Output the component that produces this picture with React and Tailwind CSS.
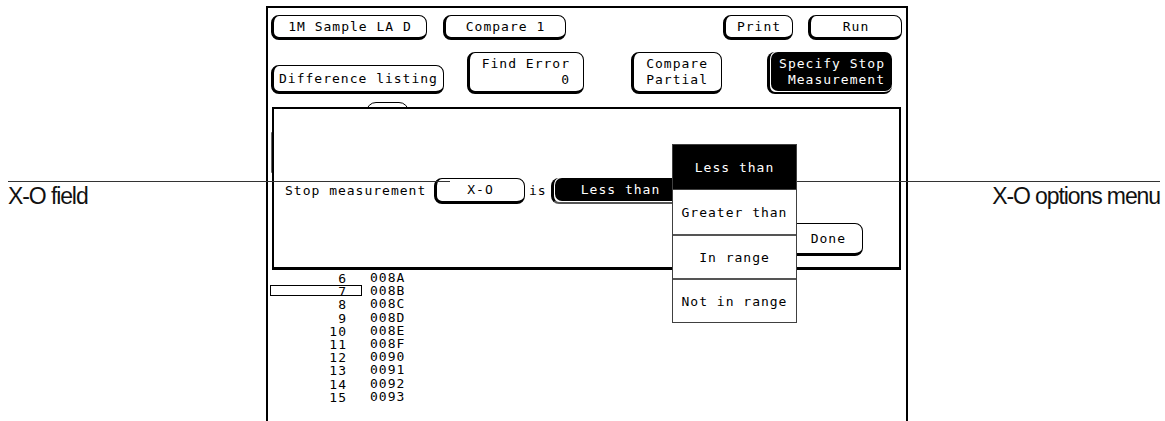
import React from "react";

const MONO = "font-['DejaVu_Sans_Mono',monospace] text-[13px] tracking-[1px] leading-none text-black";

function Btn({ className = "", children }) {
  return (
    <div
      className={`flex shrink-0 bg-white border border-black border-l-[3px] border-b-[3px] rounded-[8px] ${className}`}
    >
      {children}
    </div>
  );
}

function BlackBtn({ className = "", inner = "", children }) {
  return (
    <div
      className={`flex shrink-0 bg-white border-l-[3px] border-b-[2px] border-black rounded-[8px] pl-px pb-px ${className}`}
    >
      <div className={`flex flex-1 bg-black rounded-[7px] text-white ${inner}`}>{children}</div>
    </div>
  );
}

const rows = [
  ["6", "008A"],
  ["7", "008B"],
  ["8", "008C"],
  ["9", "008D"],
  ["10", "008E"],
  ["11", "008F"],
  ["12", "0090"],
  ["13", "0091"],
  ["14", "0092"],
  ["15", "0093"],
];

export default function App() {
  return (
    <div className="relative flex w-[1165px] h-[421px] overflow-hidden bg-white">
      {/* left annotation label */}
      <div className="w-[266px] shrink-0">
        <div className="mt-[185px] ml-[8px] font-['Liberation_Sans',Arial,sans-serif] text-[23px] leading-none tracking-[-1.1px] text-[#111]">
          X-O field
        </div>
      </div>

      {/* instrument screen */}
      <div className={`relative flex flex-col w-[642px] h-[415px] shrink-0 mt-[6px] border-x-2 border-t-2 border-black ${MONO}`}>
        {/* row 1 */}
        <div className="flex items-start mt-[7px] h-[25px]">
          <Btn className="ml-[3px] w-[156px] h-[25px] items-center justify-center">1M Sample LA D</Btn>
          <Btn className="ml-[16px] w-[123px] h-[25px] items-center justify-center">Compare 1</Btn>
          <Btn className="ml-[157px] w-[70px] h-[25px] items-center justify-center">Print</Btn>
          <Btn className="ml-[15px] w-[94px] h-[25px] items-center justify-center">Run</Btn>
        </div>

        {/* row 2 */}
        <div className="flex items-end mt-[12px] h-[42px]">
          <Btn className="ml-[3px] w-[173px] h-[29px] items-center justify-center">Difference listing</Btn>
          <Btn className="ml-[23px] w-[117px] h-[42px] flex-col items-end justify-center pr-[13px] leading-[16px]">
            <span>Find Error</span>
            <span>0</span>
          </Btn>
          <Btn className="ml-[47px] w-[91px] h-[42px] flex-col items-end justify-center pr-[13px] leading-[16px]">
            <span>Compare</span>
            <span>Partial</span>
          </Btn>
          <BlackBtn className="ml-[45px] w-[125px] h-[42px]" inner="flex-col items-end justify-center pr-[7px] leading-[16px]">
            <span>Specify Stop</span>
            <span>Measurement</span>
          </BlackBtn>
        </div>

        {/* area hidden behind the dialog */}
        <div className="flex items-start h-[177px]">
          <div className="ml-[3px] mt-[38px] w-[2px] h-[41px] rounded-full bg-[#666]" />
          <div className="ml-[93px] mt-[8px] w-[43px] h-[30px] border border-black rounded-t-[10px]" />
        </div>

        {/* listing */}
        <div className="flex flex-col ml-[2px]">
          {rows.map(([n, v]) => (
            <div key={n} className="flex items-start h-[13.2px] leading-[13.2px]">
              {n === "7" ? (
                <div className="w-[92px] h-[11px] mt-[1px] pr-[14px] text-right border border-black leading-[11px]">{n}</div>
              ) : (
                <div className="w-[92px] pr-[14px] text-right border border-transparent">{n}</div>
              )}
              <div className="ml-[8px]">{v}</div>
            </div>
          ))}
        </div>

        {/* dialog */}
        <div className="absolute left-[4px] top-[99px] w-[629px] h-[163px] flex flex-col bg-white border-2 border-b-[3px] border-black z-10">
          <div className="flex items-center mt-[68px] ml-[11px] h-[27px]">
            <span className="w-[149px]">Stop measurement</span>
            <Btn className="w-[91px] h-[26px] items-center justify-center">X-O</Btn>
            <span className="w-[26px] pl-[4px]">is</span>
            <BlackBtn className="w-[135px] h-[26px] mt-[1px] border-b-[#555]" inner="items-center justify-center">
              Less than
            </BlackBtn>
          </div>
          <div className="flex justify-end mt-[19px] mr-[36px]">
            <Btn className="w-[82px] h-[33px] items-center justify-end pr-[16px]">Done</Btn>
          </div>
        </div>

        {/* options menu */}
        <div className="absolute left-[404px] top-[136px] w-[125px] flex flex-col bg-white border border-[#404040] z-20">
          <div className="h-[44px] flex items-center justify-center bg-black text-white">Less than</div>
          <div className="h-[45px] flex items-center justify-center border-t border-[#404040]">Greater than</div>
          <div className="h-[44px] flex items-center justify-center border-t-2 border-[#555]">In range</div>
          <div className="h-[44px] flex items-center justify-center border-t-2 border-[#555]">Not in range</div>
        </div>
      </div>

      {/* right annotation label */}
      <div className="flex-1 flex justify-end pr-[5px]">
        <div className="mt-[185px] font-['Liberation_Sans',Arial,sans-serif] text-[23px] leading-none tracking-[-1.1px] text-[#111]">
          X-O options menu
        </div>
      </div>

      {/* annotation leader lines */}
      <div className="absolute left-[8px] top-[181px] w-[442px] h-px bg-[#333] z-30" />
      <div className="absolute left-[797px] top-[181px] w-[363px] h-px bg-[#333] z-30" />
    </div>
  );
}
